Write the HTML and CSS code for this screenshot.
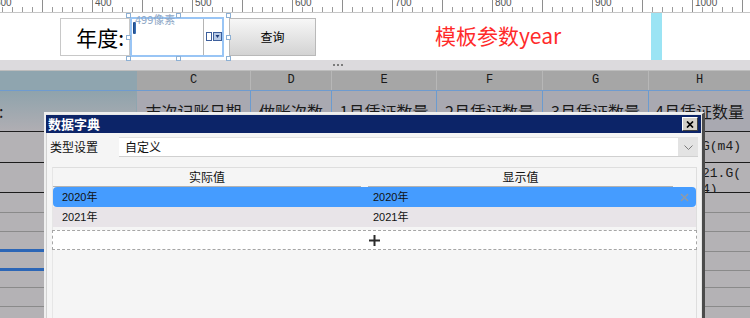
FILE: index.html
```html
<!DOCTYPE html>
<html lang="zh">
<head>
<meta charset="utf-8">
<title>报表设计器</title>
<link rel="stylesheet" href="styles.css">
</head>
<body>
<div class="app">
  <div class="ruler">
    <div class="ruler-track">
      <div class="ruler-seg"><span>300</span></div>
      <div class="ruler-seg"><span>400</span></div>
      <div class="ruler-seg"><span>500</span></div>
      <div class="ruler-seg"><span>600</span></div>
      <div class="ruler-seg"><span>700</span></div>
      <div class="ruler-seg"><span>800</span></div>
      <div class="ruler-seg"><span>900</span></div>
      <div class="ruler-seg"><span>1000</span></div>
      <div class="ruler-seg"><span>1100</span></div>
    </div>
  </div>

  <div class="canvas">
    <div class="lbl-box">年度:</div>
    <div class="input-box">
      <div class="input-text"></div>
      <div class="input-drop">
        <svg width="16" height="10" viewBox="0 0 16 10"><rect x="0.5" y="0.5" width="5" height="8" fill="#fff" stroke="#3d5f9c"/><rect x="7.5" y="0.5" width="8" height="8" fill="#b7cae6" stroke="#3d5f9c"/><polygon points="9.5,3 13.5,3 11.5,6" fill="#1c3a78"/></svg>
      </div>
      <span class="px-tip">499像素</span>
      <span class="caret"></span>
      <span class="hd tl"></span><span class="hd tm"></span><span class="hd tr"></span>
      <span class="hd ml"></span><span class="hd mr"></span>
      <span class="hd bl"></span><span class="hd bm"></span><span class="hd br"></span>
    </div>
    <div class="btn">查询</div>
    <div class="param">模板参数year</div>
    <div class="cyan"></div>
  </div>

  <div class="splitter"><span class="dot"></span><span class="dot"></span><span class="dot"></span></div>

  <div class="sheet">
    <div class="srow hdr">
      <div class="sc corner"></div>
      <div class="sc">C</div>
      <div class="sc">D</div>
      <div class="sc">E</div>
      <div class="sc">F</div>
      <div class="sc">G</div>
      <div class="sc">H</div>
    </div>
    <div class="srow r2">
      <div class="sc lead"><span class="colon">:</span></div>
      <div class="sc">末次记账日期</div>
      <div class="sc">做账次数</div>
      <div class="sc">1月凭证数量</div>
      <div class="sc">2月凭证数量</div>
      <div class="sc">3月凭证数量</div>
      <div class="sc">4月凭证数量</div>
    </div>
    <div class="brow b3"><div class="bl dark"></div><div class="bm dark"></div><div class="bh dark"><span class="htext">G(m4)</span></div></div>
    <div class="brow b4"><div class="bl dark"></div><div class="bm dark"></div><div class="bh dark"><span class="htext two">21.G(<br>4)</span></div></div>
    <div class="brow b5"><div class="bl"></div><div class="bm"></div><div class="bh"></div></div>
    <div class="brow b6"><div class="bl"></div><div class="bm"></div><div class="bh"></div></div>
    <div class="brow b7"><div class="bl blue"></div><div class="bm"></div><div class="bh"></div></div>
    <div class="brow b8"><div class="bl blue"></div><div class="bm"></div><div class="bh"></div></div>
    <div class="brow b9"><div class="bl"></div><div class="bm"></div><div class="bh"></div></div>
    <div class="brow b10"><div class="bl"></div><div class="bm"></div><div class="bh"></div></div>
    <div class="brow b11"><div class="bl"></div><div class="bm"></div><div class="bh"></div></div>
  </div>

  <div class="dialog">
    <div class="dlg-title">
      <span class="dlg-name">数据字典</span>
      <span class="dlg-close"><svg width="8" height="7" viewBox="0 0 8 7"><path d="M1 0.5L7 6.5M7 0.5L1 6.5" stroke="#000" stroke-width="1.7"/></svg></span>
    </div>
    <div class="dlg-body">
      <div class="form-row">
        <span class="form-lbl">类型设置</span>
        <div class="select">
          <span class="select-val">自定义</span>
          <span class="select-arrow"><svg width="9" height="5" viewBox="0 0 9 5"><polyline points="0.5,0.5 4.5,4.5 8.5,0.5" fill="none" stroke="#7a7a7a" stroke-width="1"/></svg></span>
        </div>
      </div>
      <div class="table">
        <div class="trow thead">
          <div class="th th1">实际值</div>
          <div class="th th2">显示值</div>
          <div></div>
        </div>
        <div class="trow item selected">
          <div class="td">2020年</div>
          <div class="td">2020年</div>
          <div class="td-x"><svg width="9" height="9" viewBox="0 0 9 9"><path d="M1 1L8 8M8 1L1 8" stroke="#8f9aa8" stroke-width="1.6"/></svg></div>
        </div>
        <div class="trow item alt">
          <div class="td">2021年</div>
          <div class="td">2021年</div>
          <div></div>
        </div>
        <div class="add-row"><svg width="11" height="11" viewBox="0 0 11 11"><path d="M5.5 0V11M0 5.5H11" stroke="#2b2b2b" stroke-width="2"/></svg></div>
      </div>
    </div>
  </div>
</div>
</body>
</html>
```

FILE: styles.css
```css
* { box-sizing: border-box; }
html, body { margin: 0; padding: 0; }
body {
  width: 750px;
  height: 318px;
  overflow: hidden;
  background: #fff;
  font-family: "Noto Sans CJK SC", "Noto Sans", sans-serif;
}
.app { position: relative; width: 750px; height: 318px; overflow: hidden; }

/* ruler */
.ruler { height: 13px; border-bottom: 1px solid #c6c6c6; overflow: hidden; background: #fff; }
.ruler-track { display: flex; margin-left: -8px; height: 12px; }
.ruler-seg {
  flex: 0 0 100px;
  height: 12px;
  border-left: 1px solid #8e8e8e;
  background:
    linear-gradient(#8e8e8e, #8e8e8e) 49px 100% / 1px 12px no-repeat,
    linear-gradient(to right, #9c9c9c 1px, transparent 1px) 9px 100% / 10px 5px repeat-x;
  font: 10px/10px "Liberation Sans", sans-serif;
  color: #555;
  overflow: hidden;
}
.ruler-seg span { display: block; margin: -2px 0 0 2px; }

/* design canvas */
.canvas { height: 47px; display: flex; align-items: flex-start; padding-left: 60px; }
.lbl-box {
  width: 70px; height: 38px; margin-top: 5px;
  border: 1px solid #c8c8c8;
  font-size: 21px; line-height: 36px; color: #000;
  text-align: right; padding-right: 5px;
}
.input-box {
  position: relative;
  width: 94px; height: 40px; margin-top: 4px;
  border: 2px solid #99c5f5;
  background: #fff;
  display: flex;
}
.input-text { flex: 1; }
.input-drop {
  width: 19px;
  border-left: 1px solid #b4b4b4;
  display: flex; align-items: center;
  padding-left: 2px;
}
.input-drop svg { display: block; }
.px-tip {
  position: absolute; left: 3px; top: -6px;
  font: 11px/12px "Noto Sans CJK SC", sans-serif;
  color: #8ea7c6;
}
.caret {
  position: absolute; left: 1px; top: 3px;
  width: 3px; height: 12px;
  border-radius: 1px;
  background: linear-gradient(to right, #173f7c, #3f78c0);
}
.hd {
  position: absolute;
  width: 5px; height: 5px;
  border: 1px solid #8db0d4;
  background: #fff;
}
.hd.tl, .hd.ml, .hd.bl { left: -6px; }
.hd.tm, .hd.bm { left: 44px; }
.hd.tr, .hd.mr, .hd.br { left: 94px; }
.hd.tl, .hd.tm, .hd.tr { top: -6px; }
.hd.ml, .hd.mr { top: 16px; }
.hd.bl, .hd.bm, .hd.br { top: 37px; }
.btn {
  width: 87px; height: 38px; margin: 5px 0 0 5px;
  border: 1px solid #b9b9b9;
  background: linear-gradient(#f7f7f7, #d3d3d3);
  font-size: 12px; line-height: 36px; text-align: center; color: #000;
}
.param {
  width: 216px; margin-left: 119px; margin-top: 8px;
  font-size: 21px; line-height: 28px;
  color: #ff2a2a;
  white-space: nowrap;
}
.cyan { width: 11px; height: 47px; background: #9be4f4; }

/* splitter */
.splitter {
  height: 10px; background: #dcdadd;
  display: flex; align-items: center; gap: 2px;
  padding-left: 333px;
}
.dot { width: 2px; height: 2px; background: #7c7c7c; }

/* spreadsheet */
.sheet { width: 760px; }
.srow { display: grid; grid-template-columns: 137px 114px 81px 105px 106px 106px 102px; }
.hdr { height: 21px; border-top: 1px solid #bdbdbd; border-bottom: 1px solid #6f9bcf; }
.hdr .sc {
  background: #a6a6a6;
  border-right: 1px solid #b7b7b7;
  font: 12px/19px "Liberation Mono", monospace;
  color: #1a1a1a;
  text-align: center;
}
.hdr .corner { background: #8fa5af; border-right-color: #8fa5af; }
.r2 { height: 41px; border-bottom: 1px solid #1e1e1e; }
.r2 .sc {
  background: #a9a9b1;
  border-right: 1px solid #6b9bd0;
  font-size: 16px; line-height: 40px;
  color: #1a1a1a;
  text-align: center;
  white-space: nowrap;
  overflow: hidden;
}
.r2 .lead {
  background: linear-gradient(#8fa3ac, #b0aeb3);
  text-align: left;
  border-right-color: #8fa5af;
}
.colon { margin-left: -1px; }

.brow { display: grid; grid-template-columns: 137px 512px 1fr; background: #b4b2b5; }
.brow > div { border-bottom: 1px solid #8a8a8a; overflow: hidden; }
.brow > .dark { border-bottom-color: #1c1c1c; }
.brow > .blue { border-bottom: 3px solid #2c66b6; }
.b3 { height: 31px; }
.b4 { height: 30px; }
.b5 { height: 20px; }
.b6 { height: 19px; }
.b7 { height: 20px; }
.b8 { height: 19px; }
.b9 { height: 17px; }
.b10 { height: 19px; }
.b11 { height: 30px; }
.bh { padding-left: 53px; }
.htext {
  display: block;
  font: 13px/30px "Liberation Mono", monospace;
  color: #1a1a1a;
  white-space: nowrap;
}
.htext.two { line-height: 16px; padding-top: 3px; }

/* dialog */
.dialog {
  position: absolute; left: 44px; top: 112px;
  width: 661px; height: 206px;
  border-left: 2px solid #efefef;
  border-top: 2px solid #efefef;
  border-right: 3px solid #4b4b4b;
  padding: 1px 1px 0 0;
  background: #e6e6e6;
  display: flex; flex-direction: column;
}
.dlg-title {
  height: 18px; flex: none;
  background: #0c2468;
  display: flex; align-items: center; justify-content: space-between;
  padding: 0 3px 0 2px;
}
.dlg-name { font-size: 13px; font-weight: bold; color: #fff; line-height: 18px; }
.dlg-close {
  width: 16px; height: 14px;
  background: #d4d0c8;
  border-top: 1px solid #fff; border-left: 1px solid #fff;
  border-right: 1px solid #404040; border-bottom: 1px solid #404040;
  display: flex; align-items: center; justify-content: center;
}
.dlg-close svg { display: block; }
.dlg-body {
  flex: 1;
  background: #f5f5f5;
  border-left: 1px solid #d2d2d2;
  padding: 4px 3px 0 3px;
  display: flex; flex-direction: column;
}
.form-row { display: flex; height: 20px; }
.form-lbl { width: 69px; font-size: 12px; line-height: 20px; color: #111; }
.select {
  flex: 1;
  display: flex;
  background: #fff;
  border-top: 1px solid #e2e2e2;
  border-bottom: 1px solid #d0d0d0;
}
.select-val { flex: 1; font-size: 12px; line-height: 18px; padding-left: 6px; color: #111; }
.select-arrow {
  width: 20px; background: #e3e3e3;
  display: flex; align-items: center; justify-content: center;
}
.select-arrow svg { display: block; }
.table {
  flex: 1;
  margin: 10px 1px 0 2px;
  border: 1px solid #dedede;
  border-bottom: none;
  border-left-color: #e6e6e6;
}
.trow { display: grid; grid-template-columns: 311px 309px 1fr; height: 20px; }
.thead { height: 19px; }
.th {
  font-size: 12px; line-height: 18px; color: #111; text-align: center;
  border-bottom: 1px solid #b2b2b2;
}
.th1 { margin-right: 3px; }
.th2 { margin-left: 4px; }
.item .td {
  font-family: "Liberation Sans", "Noto Sans CJK SC", sans-serif;
  font-size: 11px; line-height: 20px; color: #111;
  padding-left: 9px;
}
.selected { background: #459cff; border-radius: 4px; }
.alt { background: #e8e4e8; }
.td-x { display: flex; align-items: center; justify-content: center; }
.td-x svg { display: block; }
.add-row {
  height: 20px; margin: 3px -1px 0;
  border: 1px dashed #a6a6a6;
  background: #fff;
  display: flex; align-items: center; justify-content: center;
}
.add-row svg { display: block; }
```
